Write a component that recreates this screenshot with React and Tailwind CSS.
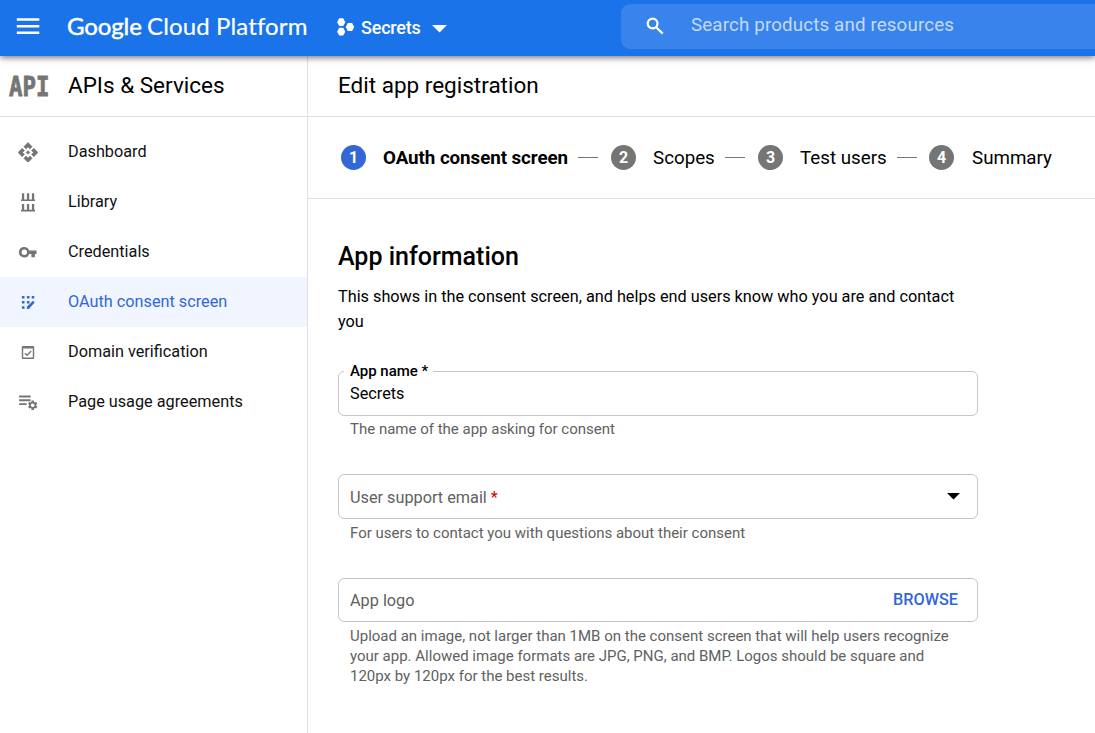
import React from "react";
import { MdSettings } from "react-icons/md";

const NAV = [
  { id: "dash", label: "Dashboard" },
  { id: "lib", label: "Library" },
  { id: "cred", label: "Credentials" },
  { id: "oauth", label: "OAuth consent screen", active: true },
  { id: "domain", label: "Domain verification" },
  { id: "page", label: "Page usage agreements" },
];

function NavIcon({ id }) {
  const common = { width: 20, height: 20, viewBox: "0 0 20 20", fill: "currentColor", className: "shrink-0" };
  if (id === "dash")
    return (
      <svg {...common} viewBox="1 0.500 22 22">
        <path stroke="currentColor" strokeWidth="0.600" d="M14 12l-2 2-2-2 2-2 2 2zm-2-6l2.120 2.120 2.500-2.500L12 1 7.380 5.620l2.500 2.500L12 6zm-6 6l2.120-2.120-2.500-2.500L1 12l4.620 4.620 2.500-2.500L6 12zm12 0l-2.120 2.120 2.500 2.500L23 12l-4.620-4.620-2.500 2.500L18 12zm-6 6l-2.120-2.120-2.500 2.500L12 23l4.620-4.620-2.500-2.500L12 18z" />
      </svg>
    );
  if (id === "lib")
    return (
      <svg {...common}>
        <path d="M3.900 1.200h2.300v6.300h-2.300zM8.900 1.200h2.300v6.300h-2.300zM13.900 1.200h2.300v6.300h-2.300zM3 7.500h14v1.600H3zM3.900 12h2.300v6h-2.300zM8.900 12h2.300v6h-2.300zM13.900 12h2.300v6h-2.300zM3 17.800h14v1.600H3z" />
      </svg>
    );
  if (id === "cred")
    return (
      <svg {...common}>
        <path fillRule="evenodd" d="M6.300 4.900a5.300 5.300 0 0 1 4.900 3.500h7.300v3.600h-1.600V15.200h-3.500v-3.200h-2.200a5.300 5.300 0 1 1-4.900-7.100zM6.300 7.500a2.700 2.700 0 1 0 0 5.400a2.700 2.700 0 0 0 0-5.400z" />
      </svg>
    );
  if (id === "oauth")
    return (
      <svg {...common}>
        <path d="M3.900 3.900h2.600v2.600h-2.600zM8.900 3.900h2.600v2.600h-2.600zM13.700 3.900h2.600v2.600h-2.600zM3.900 8.900h2.600v2.600h-2.600zM8.900 8.900h2.600v2.600h-2.600zM3.900 14.200h2.600v2.600h-2.600zM8.900 14.800L15 8.700L16.700 10.400L10.800 17H8.900z" />
      </svg>
    );
  if (id === "domain")
    return (
      <svg {...common}>
        <path fillRule="evenodd" d="M5 4h10a1.200 1.200 0 0 1 1.200 1.200v10.600A1.200 1.200 0 0 1 15 17H5a1.200 1.200 0 0 1-1.200-1.200V5.200A1.200 1.200 0 0 1 5 4zM5.200 6.600v9h9.600v-9z" />
        <path d="M6.900 11.200l2.200 2.100l4.100-4.300" fill="none" stroke="currentColor" strokeWidth="1.300" />
      </svg>
    );
  return (
    <svg {...common}>
      <path d="M1.100 3.500h11.500v1.900H1.100zM1.100 7.300h11.500v1.900H1.100zM1.100 11.200h7.500v1.900H1.100z" />
      <MdSettings x="8.800" y="7.300" size={11.800} />
    </svg>
  );
}

function Step({ n, label, active, cls }) {
  return (
    <div className="flex items-center">
      <span className={"flex size-[25px] shrink-0 items-center justify-center rounded-full text-[16px] font-bold text-white " + (active ? "bg-[#3367d6]" : "bg-[#757575]")}>{n}</span>
      <span className={"whitespace-nowrap text-[18.75px] leading-6 " + cls + (active ? " font-bold tracking-[-0.06px]" : "")}>{label}</span>
    </div>
  );
}

const Dash = ({ cls }) => <span className={"h-px w-5 shrink-0 bg-[#757575] " + cls} />;

export default function App() {
  return (
    <div className="flex h-[733px] w-[1095px] flex-col overflow-hidden bg-white font-['Roboto',sans-serif] text-black">
      <header className="relative z-10 flex h-14 shrink-0 items-start bg-[#1a73e8] text-white shadow-[0_2px_6px_rgba(0,0,0,0.5)]">
        <svg width="24" height="17" viewBox="0 0 24 17" fill="currentColor" className="mt-[18px] ml-4 shrink-0">
          <path d="M0.800 0.300h22.500v2.400H0.800zM0.800 7h22.500v2.400H0.800zM0.800 13.600h22.500v2.400H0.800z" />
        </svg>
        <div className="mt-[10px] ml-[27px] flex w-[241px] shrink-0 whitespace-nowrap font-['Lato',sans-serif] text-[24px] leading-8">
          <span className="w-[80px] tracking-[-0.1px] [-webkit-text-stroke:0.5px_white]">Google</span>
          <span className="tracking-[0.13px] [-webkit-text-stroke:0.2px_white]">Cloud Platform</span>
        </div>
        <svg width="18" height="18" viewBox="0 0 18 18" fill="currentColor" className="mt-[18px] ml-[29px] shrink-0">
          <path d="M2.200 .3h4l2.100 3.900-2.100 3.900H2.200L.1 4.200zM2.200 9.800h4l2.100 3.900-2.100 3.900H2.200L.1 13.700zM10.900 5.100h4.200l2.100 3.900-2.100 3.900h-4.200l-2.100-3.900z" />
        </svg>
        <span className="mt-4 ml-[6px] w-[60px] whitespace-nowrap text-[18px] font-medium leading-6 tracking-[-0.2px]">Secrets</span>
        <svg width="15" height="8" viewBox="0 0 15 8" fill="currentColor" className="mt-[25px] ml-[11px]"><path d="M0 0h15L7.500 7.500z" /></svg>
        <div className="mt-1 ml-auto flex h-[45px] w-[474px] rounded-l-[9px] bg-[#3984ec]">
          <svg width="20" height="20" viewBox="0 0 20 20" fill="none" stroke="currentColor" strokeWidth="2.200" className="mt-[12px] ml-6">
            <circle cx="7.600" cy="7.500" r="4.900" /><path d="M11.200 11.200L17.700 17.600" />
          </svg>
          <span className="mt-[9px] ml-[26px] whitespace-nowrap text-[18.75px] leading-6 tracking-[0.14px] text-[#c3daf9]">Search products and resources</span>
        </div>
      </header>
      <div className="flex min-h-0 flex-1">
        <aside className="flex w-[308px] shrink-0 flex-col border-r border-[#e0e0e0]">
          <div className="flex h-[61px] shrink-0 border-b border-[#e0e0e0]">
            <span className="mt-[15px] ml-[9px] w-[59px] origin-left scale-x-[0.86] font-['DejaVu_Sans_Mono',monospace] text-[26px] font-bold leading-8 text-[#757575] [-webkit-text-stroke:0.8px_#757575]">API</span>
            <h2 className="mt-[14px] whitespace-nowrap text-[22.5px] leading-[30px]">APIs &amp; Services</h2>
          </div>
          <nav className="mt-[10px] flex flex-col">
            {NAV.map((n) => (
              <div key={n.id} className={"flex h-[50px] items-center pl-[18px] " + (n.active ? "bg-[#f0f5ff] text-[#3367d6]" : "text-[#757575]")}>
                <NavIcon id={n.id} />
                <span className={"ml-[30px] whitespace-nowrap text-[16.25px] leading-6 " + (n.active ? "" : "text-[#111]")}>{n.label}</span>
              </div>
            ))}
          </nav>
        </aside>
        <main className="min-w-0 flex-1">
          <div className="h-[61px] border-b border-[#e0e0e0] pt-[14px] pl-[30px]">
            <h1 className="text-[22.5px] leading-[30px]">Edit app registration</h1>
          </div>
          <div className="flex h-[82px] items-center border-b border-[#e0e0e0] pl-[33px]">
            <Step n={1} active label="OAuth consent screen" cls="ml-[17px] w-[186px]" />
            <Dash cls="ml-[9px] mr-[13px]" />
            <Step n={2} label="Scopes" cls="ml-[17px] w-[63px]" />
            <Dash cls="ml-[9px] mr-[13px]" />
            <Step n={3} label="Test users" cls="ml-[17px] w-[87px]" />
            <Dash cls="ml-[10px] mr-[12px]" />
            <Step n={4} label="Summary" cls="ml-[18px] w-[80px]" />
          </div>
          <section className="ml-[30px] w-[640px]">
            <h2 className="mt-[42px] text-[25px] font-medium leading-8">App information</h2>
            <p className="mt-[11px] text-[16.25px] leading-[25px]">This shows in the consent screen, and helps end users know who you are and contact<br />you</p>
            <div className="relative mt-[37px] h-[45px] rounded-[6px] border border-[#c6c6c6] pt-[10px] pl-[11px]">
              <span className="absolute -top-[13px] left-[5px] bg-white pr-[5px] pl-[6px] text-[15px] font-medium leading-6 tracking-[-0.02px]">App name *</span>
              <span className="text-[16.25px] leading-6">Secrets</span>
            </div>
            <p className="mt-[2px] pl-3 text-[15px] leading-[22px] text-[#616161]">The name of the app asking for consent</p>
            <div className="mt-[34px] flex h-[45px] items-center justify-between rounded-[6px] border border-[#c6c6c6] pr-[17px] pl-[11px]">
              <span className="mt-[2px] text-[16.25px] leading-6 text-[#616161]">User support email <span className="text-[#d50000]">*</span></span>
              <svg width="13" height="7" viewBox="0 0 13 7" className="mb-px"><path d="M0 0h13L6.500 6.500z" /></svg>
            </div>
            <p className="mt-[3px] pl-3 text-[15px] leading-[22px] text-[#616161]">For users to contact you with questions about their consent</p>
            <div className="mt-[34px] flex h-[44px] items-center justify-between rounded-[6px] border border-[#c6c6c6] pr-[19px] pl-[11px]">
              <span className="mt-[2px] text-[16.25px] leading-6 text-[#616161]">App logo</span>
              <span className="mb-px text-[16.25px] font-medium leading-6 text-[#3367d6]">BROWSE</span>
            </div>
            <p className="mt-[4px] whitespace-nowrap pl-3 text-[15px] leading-5 text-[#616161]">Upload an image, not larger than 1MB on the consent screen that will help users recognize<br />your app. Allowed image formats are JPG, PNG, and BMP. Logos should be square and<br />120px by 120px for the best results.</p>
          </section>
        </main>
      </div>
    </div>
  );
}
